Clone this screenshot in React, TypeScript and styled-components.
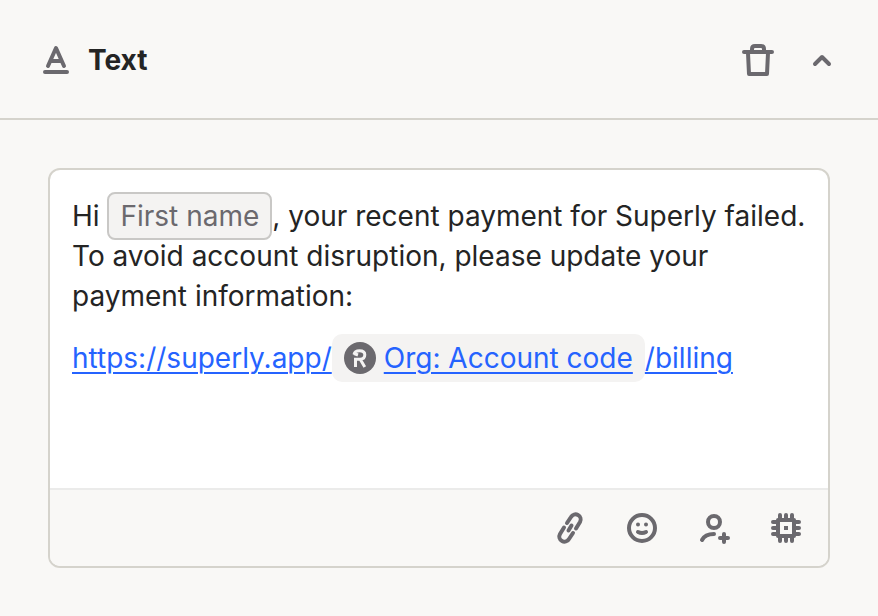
import React from "react";
import styled, { createGlobalStyle } from "styled-components";

const ink = "#242424";
const muted = "#6b696e";
const line = "#d5d3cc";
const surface = "#f9f8f6";

const GlobalStyle = createGlobalStyle`
  *, *::before, *::after { box-sizing: border-box; }
  body {
    margin: 0;
    background: ${surface};
    color: ${ink};
    font-family: Inter, "Liberation Sans", sans-serif;
  }
`;

const Panel = styled.section`
  min-height: 100vh;
`;

const Header = styled.header`
  display: flex;
  align-items: center;
  justify-content: space-between;
  height: 120px;
  padding: 2px 40px 0;
  border-bottom: 2px solid ${line};
`;

const Heading = styled.div`
  display: flex;
  align-items: center;
  gap: 16px;
`;

const Title = styled.h2`
  margin: 0;
  font-size: 28px;
  line-height: 40px;
  font-weight: 700;
`;

const Actions = styled.div`
  display: flex;
  align-items: center;
  gap: 32px;
`;

const IconButton = styled.button`
  display: flex;
  padding: 0;
  border: 0;
  background: none;
  color: ${muted};
  cursor: pointer;
`;

const IconSvg = styled.svg<{ $size: number }>`
  display: block;
  width: ${(p) => p.$size}px;
  height: ${(p) => p.$size}px;
  fill: none;
  stroke: ${muted};
  stroke-width: 4px;
  stroke-linecap: round;
  stroke-linejoin: round;
`;

const Body = styled.div`
  padding: 48px;
`;

const Editor = styled.div`
  overflow: hidden;
  border: 2px solid ${line};
  border-radius: 12px;
  background: #fff;
`;

const Content = styled.div`
  min-height: 318px;
  padding: 26px 22px;
  font-size: 28px;
  line-height: 40px;
  outline: none;
`;

const Paragraph = styled.p`
  margin: 0 0 22px;
`;

const FieldToken = styled.span`
  display: inline-block;
  height: 48px;
  margin: -4px 0;
  padding: 0 11px;
  border: 2px solid #c9c8c6;
  border-radius: 8px;
  background: #f4f3f2;
  color: ${muted};
  line-height: 44px;
`;

const Link = styled.a`
  color: #2563ff;
  text-decoration: underline;
  text-decoration-thickness: 2px;
  text-underline-offset: 4px;
`;

const LinkRow = styled.p`
  display: flex;
  align-items: center;
  margin: 0;
  white-space: nowrap;
`;

const CodeToken = styled.span`
  display: flex;
  align-items: center;
  gap: 8px;
  height: 48px;
  margin: -4px 0;
  padding: 0 12px;
  border-radius: 10px;
  background: #f4f3f2;
`;

const Logo = styled.svg`
  display: block;
  width: 32px;
  height: 32px;
`;

const Toolbar = styled.div`
  display: flex;
  align-items: center;
  justify-content: flex-end;
  gap: 32px;
  height: 78px;
  padding: 0 22px;
  border-top: 2px solid #ebebea;
  background: ${surface};
`;

function Icon({ size = 40, children }: { size?: number; children: React.ReactNode }) {
  return (
    <IconSvg $size={size} viewBox={`0 0 ${size} ${size}`} aria-hidden="true">
      {children}
    </IconSvg>
  );
}

function RecurlyLogo() {
  return (
    <Logo viewBox="0 0 32 32" aria-hidden="true">
      <circle cx="16" cy="16" r="16" fill={muted} />
      <path
        d="M10 12.500C10.500 10 12.500 8.800 15.500 8.800C19.200 8.800 20.800 10.200 20.800 12.800C20.800 15.500 19 17.200 16 17.200H11.500V25M16.200 17.200L20.800 25M10 11.500L14 13"
        fill="none"
        stroke="#f4f3f2"
        strokeWidth="3"
      />
    </Logo>
  );
}

export default function App() {
  return (
    <>
      <GlobalStyle />
      <Panel>
        <Header>
          <Heading>
            <Icon size={32}>
              <path d="M8 22L16 4L24 22M11 17H21M5 28H27" />
            </Icon>
            <Title>Text</Title>
          </Heading>
          <Actions>
            <IconButton type="button" aria-label="Delete">
              <Icon size={32}>
                <path d="M2 8H30M10 8V5Q10 2 13 2H19Q22 2 22 5V8M6 9L7 30H25L26 9" />
              </Icon>
            </IconButton>
            <IconButton type="button" aria-label="Collapse">
              <Icon size={32}>
                <path d="M9 20L16 13L23 20" />
              </Icon>
            </IconButton>
          </Actions>
        </Header>
        <Body>
          <Editor>
            <Content
              role="textbox"
              aria-multiline="true"
              aria-label="Message"
              contentEditable
              suppressContentEditableWarning
              spellCheck={false}
            >
              <Paragraph>
                Hi <FieldToken>First name</FieldToken>, your recent payment for Superly failed. To avoid
                account disruption, please update your payment information:
              </Paragraph>
              <LinkRow>
                <Link href="#billing">https://superly.app/</Link>
                <CodeToken>
                  <RecurlyLogo />
                  <Link href="#billing">Org: Account code</Link>
                </CodeToken>
                <Link href="#billing">/billing</Link>
              </LinkRow>
            </Content>
            <Toolbar>
              <IconButton type="button" aria-label="Insert link">
                <Icon>
                  <path d="M17 15L21 9A5 5 0 0 1 30 14L26 20.500M23 25L19 31A5 5 0 0 1 10 26L14 19.500M18.500 22.500L21.500 17.500" />
                </Icon>
              </IconButton>
              <IconButton type="button" aria-label="Insert emoji">
                <Icon>
                  <circle cx="20" cy="20" r="13" />
                  <path d="M16 24Q20 26 24 24" />
                  <path d="M16 16.500V16.500M24 16.500V16.500" />
                </Icon>
              </IconButton>
              <IconButton type="button" aria-label="Insert personal field">
                <Icon>
                  <circle cx="20" cy="14" r="6" />
                  <path d="M8 32Q11 26 20 26M30 26V34M26 30H34" />
                </Icon>
              </IconButton>
              <IconButton type="button" aria-label="Insert custom attribute">
                <Icon>
                  <rect x="12" y="12" width="16" height="16" />
                  <path d="M14 11V7M20 11V7M26 11V7M14 29V33M20 29V33M26 29V33M11 14H7M11 20H7M11 26H7M29 14H33M29 20H33M29 26H33" />
                  <rect x="18" y="18" width="4" height="4" fill={muted} stroke="none" />
                </Icon>
              </IconButton>
            </Toolbar>
          </Editor>
        </Body>
      </Panel>
    </>
  );
}
